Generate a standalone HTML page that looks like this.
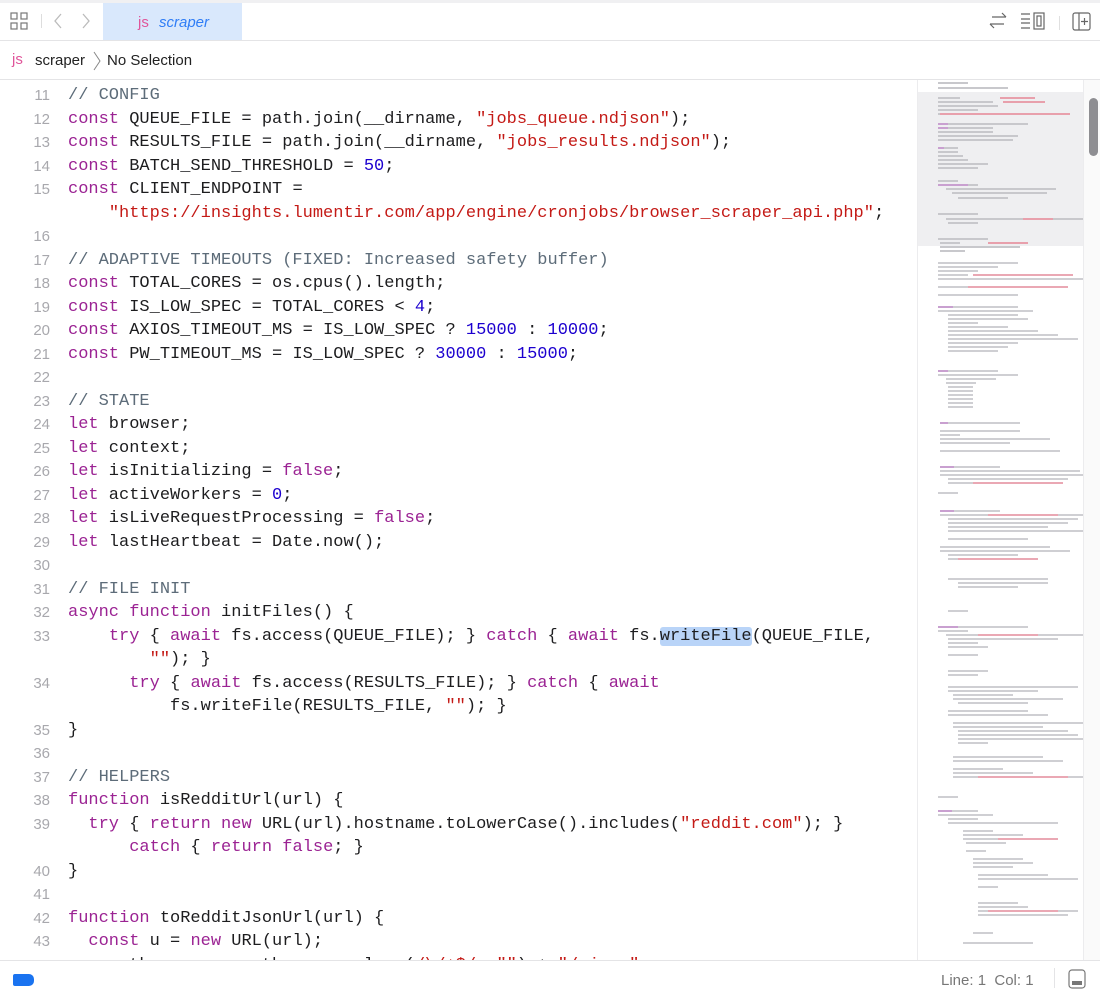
<!DOCTYPE html>
<html><head><meta charset="utf-8"><style>
*{margin:0;padding:0;box-sizing:border-box}
body{width:1100px;height:994px;background:#fff;position:relative;overflow:hidden;font-family:"Liberation Sans",sans-serif}
.top{position:absolute;left:0;top:0;width:1100px;height:41px;border-bottom:1px solid #e4e4e6;background:#fff}
.top:before{content:"";position:absolute;left:0;top:0;width:1100px;height:3px;background:#f0f0f2}
.tab{position:absolute;left:103px;top:3px;width:139px;height:37px;background:#d9e8fc;font-size:15px;line-height:39px}
.crumb{position:absolute;left:0;top:41px;width:1100px;height:39px;border-bottom:1px solid #e4e4e6;font-size:15px;color:#222}
.code{position:absolute;left:0;top:84px;width:916px;height:876px;overflow:hidden;font-family:"Liberation Mono",monospace;font-size:17px;color:#1d1d1f}
.r{height:23.5px;line-height:23.5px;white-space:pre;position:relative}
.n{position:absolute;left:0;width:50px;text-align:right;color:#a8a8ad;font-size:15px;font-family:"Liberation Sans",sans-serif}
.t{position:absolute;left:68px}
.k{color:#9b2393}.s{color:#c41a16}.d{color:#1c00cf}.c{color:#5d6c79}
.sel{background:#b9d4f8;border-radius:3px}
.mini{position:absolute;left:917px;top:80px;width:166px;height:880px;border-left:1px solid #ececee}
.scroll{position:absolute;left:1083px;top:80px;width:17px;height:880px;background:#fafafa;border-left:1px solid #ececee}
.thumb{position:absolute;left:5px;top:18px;width:9px;height:58px;border-radius:5px;background:#8e8e92}
.status{position:absolute;left:0;top:960px;width:1100px;height:34px;border-top:1px solid #e4e4e6;background:#fff;font-size:15px;color:#777}
</style></head><body>
<div class="top">
<svg style="position:absolute;left:10px;top:12px" width="18" height="18" viewBox="0 0 18 18" fill="none" stroke="#777" stroke-width="1.2"><rect x="1" y="1" width="6" height="6"/><rect x="11" y="1" width="6" height="6"/><rect x="1" y="11" width="6" height="6"/><rect x="11" y="11" width="6" height="6"/></svg>
<div style="position:absolute;left:41px;top:14px;width:1px;height:14px;background:#ddd"></div>
<svg style="position:absolute;left:53px;top:13px" width="40" height="16" viewBox="0 0 40 16" fill="none" stroke="#bbb" stroke-width="1.3"><path d="M8 1L2 8l6 7"/><path d="M30 1l6 7-6 7"/></svg>
<div class="tab"><span style="position:absolute;left:35px;color:#e0559a">js</span><span style="position:absolute;left:56px;color:#2f7df6;font-style:italic">scraper</span></div>
<svg style="position:absolute;left:988px;top:12px" width="20" height="18" viewBox="0 0 20 18" fill="none" stroke="#666" stroke-width="1.2"><path d="M4 5h14M14 1l4 4"/><path d="M16 12H2M6 16l-4-4"/></svg>
<svg style="position:absolute;left:1020px;top:12px" width="28" height="18" viewBox="0 0 28 18" fill="none" stroke="#666" stroke-width="1.2"><path d="M1 2h9M1 7h9M1 11h9M1 16h9"/><rect x="14" y="1" width="10" height="16"/><rect x="17" y="4" width="4" height="10"/></svg>
<div style="position:absolute;left:1059px;top:16px;width:1px;height:14px;background:#e0e0e0"></div>
<svg style="position:absolute;left:1072px;top:12px" width="19" height="19" viewBox="0 0 19 19" fill="none" stroke="#666" stroke-width="1.2"><rect x="1" y="1" width="17" height="17" rx="2"/><path d="M7 1v17M12.5 6v7M9 9.5h7"/></svg>
</div>
<div class="crumb"><span style="position:absolute;left:12px;top:10px;color:#e0559a">js</span><span style="position:absolute;left:35px;top:11px">scraper</span><svg style="position:absolute;left:93px;top:10px" width="8" height="20" viewBox="0 0 8 20" fill="none" stroke="#888"><path d="M1 1l6 9-6 9"/></svg><span style="position:absolute;left:107px;top:11px">No Selection</span></div>
<div class="code">
<div class="r"><span class="n">11</span><span class="t"><span class="c">// CONFIG</span></span></div>
<div class="r"><span class="n">12</span><span class="t"><span class="k">const</span> QUEUE_FILE = path.join(__dirname, <span class="s">"jobs_queue.ndjson"</span>);</span></div>
<div class="r"><span class="n">13</span><span class="t"><span class="k">const</span> RESULTS_FILE = path.join(__dirname, <span class="s">"jobs_results.ndjson"</span>);</span></div>
<div class="r"><span class="n">14</span><span class="t"><span class="k">const</span> BATCH_SEND_THRESHOLD = <span class="d">50</span>;</span></div>
<div class="r"><span class="n">15</span><span class="t"><span class="k">const</span> CLIENT_ENDPOINT =</span></div>
<div class="r"><span class="t">    <span class="s">"https://insights.lumentir.com/app/engine/cronjobs/browser_scraper_api.php"</span>;</span></div>
<div class="r"><span class="n">16</span></div>
<div class="r"><span class="n">17</span><span class="t"><span class="c">// ADAPTIVE TIMEOUTS (FIXED: Increased safety buffer)</span></span></div>
<div class="r"><span class="n">18</span><span class="t"><span class="k">const</span> TOTAL_CORES = os.cpus().length;</span></div>
<div class="r"><span class="n">19</span><span class="t"><span class="k">const</span> IS_LOW_SPEC = TOTAL_CORES &lt; <span class="d">4</span>;</span></div>
<div class="r"><span class="n">20</span><span class="t"><span class="k">const</span> AXIOS_TIMEOUT_MS = IS_LOW_SPEC ? <span class="d">15000</span> : <span class="d">10000</span>;</span></div>
<div class="r"><span class="n">21</span><span class="t"><span class="k">const</span> PW_TIMEOUT_MS = IS_LOW_SPEC ? <span class="d">30000</span> : <span class="d">15000</span>;</span></div>
<div class="r"><span class="n">22</span></div>
<div class="r"><span class="n">23</span><span class="t"><span class="c">// STATE</span></span></div>
<div class="r"><span class="n">24</span><span class="t"><span class="k">let</span> browser;</span></div>
<div class="r"><span class="n">25</span><span class="t"><span class="k">let</span> context;</span></div>
<div class="r"><span class="n">26</span><span class="t"><span class="k">let</span> isInitializing = <span class="k">false</span>;</span></div>
<div class="r"><span class="n">27</span><span class="t"><span class="k">let</span> activeWorkers = <span class="d">0</span>;</span></div>
<div class="r"><span class="n">28</span><span class="t"><span class="k">let</span> isLiveRequestProcessing = <span class="k">false</span>;</span></div>
<div class="r"><span class="n">29</span><span class="t"><span class="k">let</span> lastHeartbeat = Date.now();</span></div>
<div class="r"><span class="n">30</span></div>
<div class="r"><span class="n">31</span><span class="t"><span class="c">// FILE INIT</span></span></div>
<div class="r"><span class="n">32</span><span class="t"><span class="k">async</span> <span class="k">function</span> initFiles() {</span></div>
<div class="r"><span class="n">33</span><span class="t">    <span class="k">try</span> { <span class="k">await</span> fs.access(QUEUE_FILE); } <span class="k">catch</span> { <span class="k">await</span> fs.<span class="sel">writeFile</span>(QUEUE_FILE,</span></div>
<div class="r"><span class="t">        <span class="s">""</span>); }</span></div>
<div class="r"><span class="n">34</span><span class="t">      <span class="k">try</span> { <span class="k">await</span> fs.access(RESULTS_FILE); } <span class="k">catch</span> { <span class="k">await</span></span></div>
<div class="r"><span class="t">          fs.writeFile(RESULTS_FILE, <span class="s">""</span>); }</span></div>
<div class="r"><span class="n">35</span><span class="t">}</span></div>
<div class="r"><span class="n">36</span></div>
<div class="r"><span class="n">37</span><span class="t"><span class="c">// HELPERS</span></span></div>
<div class="r"><span class="n">38</span><span class="t"><span class="k">function</span> isRedditUrl(url) {</span></div>
<div class="r"><span class="n">39</span><span class="t">  <span class="k">try</span> { <span class="k">return</span> <span class="k">new</span> URL(url).hostname.toLowerCase().includes(<span class="s">"reddit.com"</span>); }</span></div>
<div class="r"><span class="t">      <span class="k">catch</span> { <span class="k">return</span> <span class="k">false</span>; }</span></div>
<div class="r"><span class="n">40</span><span class="t">}</span></div>
<div class="r"><span class="n">41</span></div>
<div class="r"><span class="n">42</span><span class="t"><span class="k">function</span> toRedditJsonUrl(url) {</span></div>
<div class="r"><span class="n">43</span><span class="t">  <span class="k">const</span> u = <span class="k">new</span> URL(url);</span></div>
<div class="r"><span class="n">44</span><span class="t">  u.pathname = u.pathname.replace(<span class="s">/\/+$/</span>, <span class="s">""</span>) + <span class="s">"/.json"</span>;</span></div>
</div>
<div class="mini">
<svg width="166" height="880" viewBox="0 0 166 880">
<rect x="0" y="12" width="166" height="154" fill="#efeff1"/>
<g fill="#c8c8cc">
<rect x="20" y="2" width="30" height="2"/><rect x="20" y="7" width="70" height="2"/>
<rect x="20" y="17" width="22" height="2"/><rect x="20" y="21" width="55" height="2"/><rect x="20" y="25" width="60" height="2"/><rect x="20" y="29" width="40" height="2"/><rect x="20" y="33" width="30" height="2"/>
<rect x="20" y="43" width="90" height="2"/><rect x="20" y="47" width="55" height="2"/><rect x="20" y="51" width="55" height="2"/><rect x="20" y="55" width="80" height="2"/><rect x="20" y="59" width="75" height="2"/>
<rect x="20" y="67" width="20" height="2"/><rect x="20" y="71" width="20" height="2"/><rect x="20" y="75" width="25" height="2"/><rect x="20" y="79" width="30" height="2"/><rect x="20" y="83" width="50" height="2"/><rect x="20" y="87" width="40" height="2"/>
<rect x="20" y="100" width="20" height="2"/><rect x="20" y="104" width="40" height="2"/><rect x="28" y="108" width="110" height="2"/><rect x="34" y="112" width="95" height="2"/><rect x="40" y="117" width="50" height="2"/>
<rect x="20" y="133" width="40" height="2"/><rect x="28" y="138" width="145" height="2"/><rect x="30" y="142" width="30" height="2"/>
<rect x="20" y="158" width="50" height="2"/><rect x="22" y="162" width="20" height="2"/><rect x="22" y="166" width="80" height="2"/><rect x="22" y="170" width="25" height="2"/>
</g>
<g fill="#e8a0ac"><rect x="82" y="17" width="35" height="2"/><rect x="85" y="21" width="42" height="2"/><rect x="22" y="33" width="130" height="2"/><rect x="105" y="138" width="30" height="2"/><rect x="70" y="162" width="40" height="2"/></g>
<g fill="#c9a0d0"><rect x="20" y="43" width="10" height="2"/><rect x="20" y="47" width="10" height="2"/><rect x="20" y="67" width="6" height="2"/><rect x="20" y="104" width="30" height="2"/></g>
<g fill="#cfcfd3">
<rect x="20" y="182" width="80" height="2"/><rect x="20" y="186" width="60" height="2"/><rect x="20" y="190" width="40" height="2"/><rect x="20" y="194" width="30" height="2"/><rect x="20" y="198" width="150" height="2"/><rect x="20" y="206" width="130" height="2"/><rect x="20" y="214" width="80" height="2"/>
<rect x="20" y="226" width="80" height="2"/><rect x="20" y="230" width="95" height="2"/><rect x="30" y="234" width="70" height="2"/><rect x="30" y="238" width="80" height="2"/><rect x="30" y="242" width="30" height="2"/><rect x="30" y="246" width="60" height="2"/><rect x="30" y="250" width="90" height="2"/><rect x="30" y="254" width="110" height="2"/><rect x="30" y="258" width="130" height="2"/><rect x="30" y="262" width="70" height="2"/><rect x="30" y="266" width="60" height="2"/><rect x="30" y="270" width="50" height="2"/>
<rect x="20" y="290" width="60" height="2"/><rect x="20" y="294" width="80" height="2"/><rect x="28" y="298" width="50" height="2"/><rect x="28" y="302" width="30" height="2"/><rect x="30" y="306" width="25" height="2"/><rect x="30" y="310" width="25" height="2"/><rect x="30" y="314" width="25" height="2"/><rect x="30" y="318" width="25" height="2"/><rect x="30" y="322" width="25" height="2"/><rect x="30" y="326" width="25" height="2"/>
<rect x="22" y="342" width="80" height="2"/><rect x="22" y="350" width="80" height="2"/><rect x="22" y="354" width="20" height="2"/><rect x="22" y="358" width="110" height="2"/><rect x="22" y="362" width="70" height="2"/><rect x="22" y="370" width="120" height="2"/>
<rect x="22" y="386" width="60" height="2"/><rect x="22" y="390" width="140" height="2"/><rect x="22" y="394" width="150" height="2"/><rect x="30" y="398" width="120" height="2"/><rect x="30" y="402" width="80" height="2"/><rect x="20" y="412" width="20" height="2"/>
<rect x="22" y="430" width="60" height="2"/><rect x="22" y="434" width="150" height="2"/><rect x="30" y="438" width="130" height="2"/><rect x="30" y="442" width="120" height="2"/><rect x="30" y="446" width="100" height="2"/><rect x="30" y="450" width="140" height="2"/><rect x="30" y="458" width="80" height="2"/>
<rect x="22" y="466" width="110" height="2"/><rect x="22" y="470" width="130" height="2"/><rect x="30" y="474" width="70" height="2"/><rect x="30" y="478" width="40" height="2"/><rect x="30" y="498" width="100" height="2"/><rect x="40" y="502" width="90" height="2"/><rect x="40" y="506" width="60" height="2"/><rect x="30" y="530" width="20" height="2"/>
<rect x="20" y="546" width="90" height="2"/><rect x="20" y="550" width="30" height="2"/><rect x="28" y="554" width="140" height="2"/><rect x="30" y="558" width="110" height="2"/><rect x="30" y="562" width="30" height="2"/><rect x="30" y="566" width="40" height="2"/><rect x="30" y="574" width="30" height="2"/><rect x="30" y="590" width="40" height="2"/><rect x="30" y="594" width="30" height="2"/>
<rect x="30" y="606" width="130" height="2"/><rect x="30" y="610" width="90" height="2"/><rect x="35" y="614" width="60" height="2"/><rect x="35" y="618" width="110" height="2"/><rect x="40" y="622" width="70" height="2"/><rect x="30" y="630" width="80" height="2"/><rect x="30" y="634" width="100" height="2"/><rect x="35" y="642" width="130" height="2"/><rect x="35" y="646" width="90" height="2"/><rect x="40" y="650" width="110" height="2"/><rect x="40" y="654" width="120" height="2"/><rect x="40" y="658" width="130" height="2"/><rect x="40" y="662" width="30" height="2"/>
<rect x="35" y="676" width="90" height="2"/><rect x="35" y="680" width="110" height="2"/><rect x="35" y="688" width="50" height="2"/><rect x="35" y="692" width="80" height="2"/><rect x="35" y="696" width="150" height="2"/><rect x="20" y="716" width="20" height="2"/>
<rect x="20" y="730" width="40" height="2"/><rect x="20" y="734" width="55" height="2"/><rect x="30" y="738" width="30" height="2"/><rect x="30" y="742" width="110" height="2"/><rect x="45" y="750" width="30" height="2"/><rect x="45" y="754" width="60" height="2"/><rect x="45" y="758" width="85" height="2"/><rect x="48" y="762" width="40" height="2"/><rect x="48" y="770" width="20" height="2"/><rect x="55" y="778" width="50" height="2"/><rect x="55" y="782" width="60" height="2"/><rect x="55" y="786" width="40" height="2"/><rect x="60" y="794" width="70" height="2"/><rect x="60" y="798" width="100" height="2"/><rect x="60" y="806" width="20" height="2"/><rect x="60" y="822" width="40" height="2"/><rect x="60" y="826" width="50" height="2"/><rect x="60" y="830" width="100" height="2"/><rect x="60" y="834" width="90" height="2"/><rect x="55" y="852" width="20" height="2"/><rect x="45" y="862" width="70" height="2"/>
</g>
<g fill="#eaa8b4"><rect x="55" y="194" width="100" height="2"/><rect x="50" y="206" width="100" height="2"/><rect x="55" y="402" width="90" height="2"/><rect x="70" y="434" width="70" height="2"/><rect x="40" y="478" width="80" height="2"/><rect x="60" y="554" width="60" height="2"/><rect x="60" y="696" width="90" height="2"/><rect x="80" y="758" width="60" height="2"/><rect x="70" y="830" width="70" height="2"/></g>
<g fill="#c9a0d0"><rect x="20" y="226" width="15" height="2"/><rect x="20" y="290" width="10" height="2"/><rect x="22" y="342" width="8" height="2"/><rect x="22" y="386" width="14" height="2"/><rect x="22" y="430" width="14" height="2"/><rect x="20" y="546" width="20" height="2"/><rect x="20" y="730" width="14" height="2"/></g>
</svg>
</div>
<div class="scroll"><div class="thumb"></div></div>
<div class="status">
<div style="position:absolute;left:13px;top:13px;width:21px;height:12px;background:#1a73f0;border-radius:2px 5px 5px 2px"></div>
<span style="position:absolute;left:941px;top:11px">Line: 1&nbsp; Col: 1</span>
<div style="position:absolute;left:1054px;top:7px;width:1px;height:20px;background:#e4e4e6"></div>
<svg style="position:absolute;left:1068px;top:8px" width="18" height="20" viewBox="0 0 18 20" fill="none" stroke="#777" stroke-width="1.2"><rect x="1" y="1" width="16" height="18" rx="3"/><rect x="4" y="12" width="10" height="4" fill="#777" stroke="none"/></svg>
</div>
</body></html>
